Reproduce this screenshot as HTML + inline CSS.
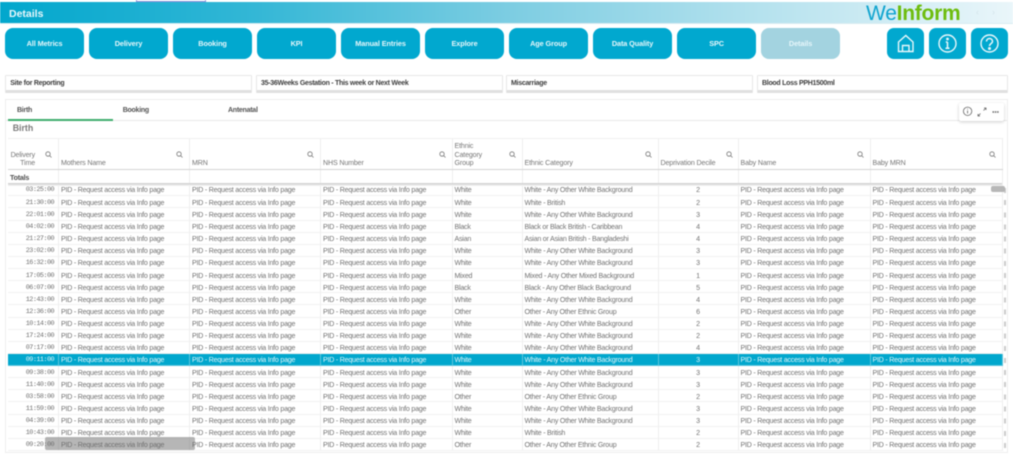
<!DOCTYPE html>
<html><head><meta charset="utf-8"><style>
html,body{margin:0;padding:0;background:#fff}
body{width:1013px;height:458px;overflow:hidden;position:relative;font-family:"Liberation Sans",sans-serif}
.abs{position:absolute}
#root{position:absolute;left:0;top:0;width:1013px;height:458px;overflow:hidden;filter:blur(.4px)}
.hdr{left:0;top:2px;width:1013px;height:21px;background:linear-gradient(90deg,#01a7cd 0%,#33b7d6 25%,#7ccde2 50%,#b5e2ee 75%,#eaf6fa 100%);border-bottom:1px solid #d9ecf2}
.btn{position:absolute;top:28px;height:31px;width:78.5px;background:#01a8cf;border-radius:8px;color:#e6f6fa;font-size:7.3px;font-weight:bold;text-align:center;line-height:31px;letter-spacing:-.1px}
.ib{position:absolute;top:28px;width:37px;height:31px;background:#01a8cf;border-radius:7px}
.flt{position:absolute;top:75px;height:18px;border:1px solid #e8e8e8;border-bottom:3px solid #e0e0e0;font-size:7px;font-weight:bold;color:#404040;line-height:15.500px;padding-left:4px;box-sizing:border-box;border-radius:1px;letter-spacing:-.28px}
.tab{position:absolute;top:107px;font-size:7px;font-weight:bold;color:#555;letter-spacing:-.25px}
table{position:absolute;left:8px;top:138px;border-collapse:collapse;table-layout:fixed;width:994px;font-size:7.1px;color:#727272;letter-spacing:-.235px}
td,th{padding:0 2px;overflow:hidden;white-space:nowrap;border-right:1px solid #eee;border-bottom:1px solid #f1f1f1;font-weight:normal;box-sizing:border-box}
tr.r td{height:12.14px;line-height:8px;padding-top:2.500px;vertical-align:top}
tr.h th{height:31px;vertical-align:bottom;text-align:left;padding-bottom:1px;border-bottom:1px solid #d4d4d4;color:#777;white-space:normal;line-height:8.4px;position:relative;letter-spacing:-.15px}
tr.t td{height:14.7px;border-bottom:0;font-weight:bold;color:#505050;padding-top:2px;letter-spacing:-.2px}
.c{text-align:center}
tr.r td.m{text-align:right;font-family:"Liberation Mono",monospace;font-size:6.8px;letter-spacing:-.55px;padding-right:4px;color:#707070}
tr.s td,tr.r.s td.m{background:#01a7cd;color:#e2f5f9;border-color:#5cc4dd}
.q{position:absolute;top:13px;right:6px;width:7px;height:7px}
</style></head><body><div id="root">
<div class="abs" style="left:136px;top:0;width:70px;height:2px;border:1px solid #8d8dd8;border-top:0;box-sizing:border-box"></div>
<div class="abs hdr"></div>
<div class="abs" style="left:9px;top:8px;font-size:10.5px;font-weight:bold;color:#e8f7fb">Details</div>
<div class="abs" style="left:866px;top:2px;font-size:21px;line-height:24px;letter-spacing:-.25px;font-weight:normal"><span style="color:#0fa4cf">We</span><span style="color:#6ebd0f;font-weight:bold">Inform</span></div>
<div class="abs" style="left:976px;top:7px;font-size:9px;color:#d4e4ea">&#8249;</div>
<div class="abs" style="left:992px;top:7px;font-size:9px;color:#d4e4ea">&#8250;</div>

<div class="btn" style="left:5.3px">All Metrics</div>
<div class="btn" style="left:89.3px">Delivery</div>
<div class="btn" style="left:173.3px">Booking</div>
<div class="btn" style="left:257.3px">KPI</div>
<div class="btn" style="left:341.3px">Manual Entries</div>
<div class="btn" style="left:425.3px">Explore</div>
<div class="btn" style="left:509.3px">Age Group</div>
<div class="btn" style="left:593.3px">Data Quality</div>
<div class="btn" style="left:677.3px">SPC</div>
<div class="btn" style="left:761.3px;background:#a3d3e0">Details</div>

<div class="ib" style="left:887px"><svg width="37" height="31" fill="none" stroke="#e8f7fb" stroke-width="1.4"><path d="M11.500 14 18.800 7.500 26 14V23.500H11.500ZM15.500 23.500V17.500H22V23.500"/></svg></div>
<div class="ib" style="left:929px"><svg width="37" height="31" fill="none" stroke="#e8f7fb" stroke-width="1.4"><circle cx="18.500" cy="15.500" r="8.500"/><path d="M18.500 14v6M16.500 20.200h4M16.800 14h1.700" stroke-width="1.500"/><circle cx="18.500" cy="11" r=".7" fill="#e8f7fb"/></svg></div>
<div class="ib" style="left:971px"><svg width="37" height="31" fill="none" stroke="#e8f7fb" stroke-width="1.4"><circle cx="18.500" cy="15.500" r="8.500"/><path d="M15.500 13.500c0-4 6-4 6 0 0 2-3 2.200-3 4.500" stroke-width="1.500"/><circle cx="18.500" cy="20.500" r=".8" fill="#e8f7fb"/></svg></div>

<div class="flt" style="left:5.3px;width:246.5px">Site for Reporting</div>
<div class="flt" style="left:256px;width:247px">35-36Weeks Gestation - This week or Next Week</div>
<div class="flt" style="left:506px;width:247px">Miscarriage</div>
<div class="flt" style="left:757px;width:251px">Blood Loss PPH1500ml</div>

<div class="abs" style="left:5px;top:99px;width:1003px;height:354px;border:1px solid #eee;box-sizing:border-box"></div>
<div class="abs" style="left:6px;top:120px;width:1001px;height:1px;background:#eaeaea"></div>
<div class="abs" style="left:8px;top:119px;width:105px;height:1.500px;background:#3fae6d"></div>
<div class="tab" style="left:17px">Birth</div>
<div class="tab" style="left:122.700px">Booking</div>
<div class="tab" style="left:228px">Antenatal</div>
<div class="abs" style="left:12.700px;top:123px;font-size:8.800px;font-weight:bold;color:#7b7b7b">Birth</div>

<div class="abs" style="left:958.700px;top:103px;width:45.500px;height:17.500px;background:#fff;border-radius:2px;box-shadow:0 1px 3px rgba(0,0,0,.2)"><svg width="46" height="18" fill="none" stroke="#666" stroke-width=".8"><circle cx="8.600" cy="8.300" r="4.200"/><path d="M8.600 7.500v3M8.600 5.800v.7"/><path d="M19 13l2.500-2.500M19 11v2h2M24.500 7.500 27 5M25 5h2v2"/><path d="M33.500 9h1.500M35.800 9h1.500M38.100 9h1.500" stroke-width="1.400"/></svg></div>

<table>
<colgroup><col style="width:50.500px"><col style="width:131px"><col style="width:131px"><col style="width:131.500px"><col style="width:70px"><col style="width:136px"><col style="width:80px"><col style="width:132px"><col style="width:132px"></colgroup>
<tr class="h">
<th style="text-align:right;padding-right:23px">Delivery<br>Time<svg class="q" viewBox="0 0 7 7" fill="none" stroke="#777" stroke-width=".8"><circle cx="3" cy="3" r="2.200"/><path d="M4.600 4.600 6.500 6.500"/></svg></th>
<th>Mothers Name<svg class="q" viewBox="0 0 7 7" fill="none" stroke="#777" stroke-width=".8"><circle cx="3" cy="3" r="2.200"/><path d="M4.600 4.600 6.500 6.500"/></svg></th>
<th>MRN<svg class="q" viewBox="0 0 7 7" fill="none" stroke="#777" stroke-width=".8"><circle cx="3" cy="3" r="2.200"/><path d="M4.600 4.600 6.500 6.500"/></svg></th>
<th>NHS Number<svg class="q" viewBox="0 0 7 7" fill="none" stroke="#777" stroke-width=".8"><circle cx="3" cy="3" r="2.200"/><path d="M4.600 4.600 6.500 6.500"/></svg></th>
<th>Ethnic<br>Category<br>Group<svg class="q" viewBox="0 0 7 7" fill="none" stroke="#777" stroke-width=".8"><circle cx="3" cy="3" r="2.200"/><path d="M4.600 4.600 6.500 6.500"/></svg></th>
<th>Ethnic Category<svg class="q" viewBox="0 0 7 7" fill="none" stroke="#777" stroke-width=".8"><circle cx="3" cy="3" r="2.200"/><path d="M4.600 4.600 6.500 6.500"/></svg></th>
<th>Deprivation Decile<svg class="q" viewBox="0 0 7 7" fill="none" stroke="#777" stroke-width=".8" style="right:5px"><circle cx="3" cy="3" r="2.200"/><path d="M4.600 4.600 6.500 6.500"/></svg></th>
<th>Baby Name<svg class="q" viewBox="0 0 7 7" fill="none" stroke="#777" stroke-width=".8"><circle cx="3" cy="3" r="2.200"/><path d="M4.600 4.600 6.500 6.500"/></svg></th>
<th>Baby MRN<svg class="q" viewBox="0 0 7 7" fill="none" stroke="#777" stroke-width=".8"><circle cx="3" cy="3" r="2.200"/><path d="M4.600 4.600 6.500 6.500"/></svg></th>
</tr>
<tr class="t"><td>Totals</td><td></td><td></td><td></td><td></td><td></td><td></td><td></td><td></td></tr>
<tr class="r"><td class="m">03:25:00</td><td>PID - Request access via Info page</td><td>PID - Request access via Info page</td><td>PID - Request access via Info page</td><td>White</td><td>White - Any Other White Background</td><td class="c">2</td><td>PID - Request access via Info page</td><td>PID - Request access via Info page</td></tr>
<tr class="r"><td class="m">21:30:00</td><td>PID - Request access via Info page</td><td>PID - Request access via Info page</td><td>PID - Request access via Info page</td><td>White</td><td>White - British</td><td class="c">2</td><td>PID - Request access via Info page</td><td>PID - Request access via Info page</td></tr>
<tr class="r"><td class="m">22:01:00</td><td>PID - Request access via Info page</td><td>PID - Request access via Info page</td><td>PID - Request access via Info page</td><td>White</td><td>White - Any Other White Background</td><td class="c">3</td><td>PID - Request access via Info page</td><td>PID - Request access via Info page</td></tr>
<tr class="r"><td class="m">04:02:00</td><td>PID - Request access via Info page</td><td>PID - Request access via Info page</td><td>PID - Request access via Info page</td><td>Black</td><td>Black or Black British - Caribbean</td><td class="c">4</td><td>PID - Request access via Info page</td><td>PID - Request access via Info page</td></tr>
<tr class="r"><td class="m">21:27:00</td><td>PID - Request access via Info page</td><td>PID - Request access via Info page</td><td>PID - Request access via Info page</td><td>Asian</td><td>Asian or Asian British - Bangladeshi</td><td class="c">4</td><td>PID - Request access via Info page</td><td>PID - Request access via Info page</td></tr>
<tr class="r"><td class="m">23:02:00</td><td>PID - Request access via Info page</td><td>PID - Request access via Info page</td><td>PID - Request access via Info page</td><td>White</td><td>White - Any Other White Background</td><td class="c">3</td><td>PID - Request access via Info page</td><td>PID - Request access via Info page</td></tr>
<tr class="r"><td class="m">16:32:00</td><td>PID - Request access via Info page</td><td>PID - Request access via Info page</td><td>PID - Request access via Info page</td><td>White</td><td>White - Any Other White Background</td><td class="c">3</td><td>PID - Request access via Info page</td><td>PID - Request access via Info page</td></tr>
<tr class="r"><td class="m">17:05:00</td><td>PID - Request access via Info page</td><td>PID - Request access via Info page</td><td>PID - Request access via Info page</td><td>Mixed</td><td>Mixed - Any Other Mixed Background</td><td class="c">1</td><td>PID - Request access via Info page</td><td>PID - Request access via Info page</td></tr>
<tr class="r"><td class="m">06:07:00</td><td>PID - Request access via Info page</td><td>PID - Request access via Info page</td><td>PID - Request access via Info page</td><td>Black</td><td>Black - Any Other Black Background</td><td class="c">5</td><td>PID - Request access via Info page</td><td>PID - Request access via Info page</td></tr>
<tr class="r"><td class="m">12:43:00</td><td>PID - Request access via Info page</td><td>PID - Request access via Info page</td><td>PID - Request access via Info page</td><td>White</td><td>White - Any Other White Background</td><td class="c">4</td><td>PID - Request access via Info page</td><td>PID - Request access via Info page</td></tr>
<tr class="r"><td class="m">12:36:00</td><td>PID - Request access via Info page</td><td>PID - Request access via Info page</td><td>PID - Request access via Info page</td><td>Other</td><td>Other - Any Other Ethnic Group</td><td class="c">6</td><td>PID - Request access via Info page</td><td>PID - Request access via Info page</td></tr>
<tr class="r"><td class="m">10:14:00</td><td>PID - Request access via Info page</td><td>PID - Request access via Info page</td><td>PID - Request access via Info page</td><td>White</td><td>White - Any Other White Background</td><td class="c">2</td><td>PID - Request access via Info page</td><td>PID - Request access via Info page</td></tr>
<tr class="r"><td class="m">17:24:00</td><td>PID - Request access via Info page</td><td>PID - Request access via Info page</td><td>PID - Request access via Info page</td><td>White</td><td>White - Any Other White Background</td><td class="c">2</td><td>PID - Request access via Info page</td><td>PID - Request access via Info page</td></tr>
<tr class="r"><td class="m">07:17:00</td><td>PID - Request access via Info page</td><td>PID - Request access via Info page</td><td>PID - Request access via Info page</td><td>White</td><td>White - Any Other White Background</td><td class="c">4</td><td>PID - Request access via Info page</td><td>PID - Request access via Info page</td></tr>
<tr class="r s"><td class="m">09:11:00</td><td>PID - Request access via Info page</td><td>PID - Request access via Info page</td><td>PID - Request access via Info page</td><td>White</td><td>White - Any Other White Background</td><td class="c">3</td><td>PID - Request access via Info page</td><td>PID - Request access via Info page</td></tr>
<tr class="r"><td class="m">09:38:00</td><td>PID - Request access via Info page</td><td>PID - Request access via Info page</td><td>PID - Request access via Info page</td><td>White</td><td>White - Any Other White Background</td><td class="c">3</td><td>PID - Request access via Info page</td><td>PID - Request access via Info page</td></tr>
<tr class="r"><td class="m">11:40:00</td><td>PID - Request access via Info page</td><td>PID - Request access via Info page</td><td>PID - Request access via Info page</td><td>White</td><td>White - Any Other White Background</td><td class="c">3</td><td>PID - Request access via Info page</td><td>PID - Request access via Info page</td></tr>
<tr class="r"><td class="m">03:58:00</td><td>PID - Request access via Info page</td><td>PID - Request access via Info page</td><td>PID - Request access via Info page</td><td>Other</td><td>Other - Any Other Ethnic Group</td><td class="c">2</td><td>PID - Request access via Info page</td><td>PID - Request access via Info page</td></tr>
<tr class="r"><td class="m">11:59:00</td><td>PID - Request access via Info page</td><td>PID - Request access via Info page</td><td>PID - Request access via Info page</td><td>White</td><td>White - Any Other White Background</td><td class="c">3</td><td>PID - Request access via Info page</td><td>PID - Request access via Info page</td></tr>
<tr class="r"><td class="m">04:39:00</td><td>PID - Request access via Info page</td><td>PID - Request access via Info page</td><td>PID - Request access via Info page</td><td>White</td><td>White - Any Other White Background</td><td class="c">3</td><td>PID - Request access via Info page</td><td>PID - Request access via Info page</td></tr>
<tr class="r"><td class="m">10:43:00</td><td>PID - Request access via Info page</td><td>PID - Request access via Info page</td><td>PID - Request access via Info page</td><td>White</td><td>White - British</td><td class="c">2</td><td>PID - Request access via Info page</td><td>PID - Request access via Info page</td></tr>
<tr class="r"><td class="m">09:20:00</td><td>PID - Request access via Info page</td><td>PID - Request access via Info page</td><td>PID - Request access via Info page</td><td>Other</td><td>Other - Any Other Ethnic Group</td><td class="c">2</td><td>PID - Request access via Info page</td><td>PID - Request access via Info page</td></tr>
</table>
<div class="abs" style="left:8px;top:183px;width:994px;height:3px;background:linear-gradient(#ccc,#f6f6f6)"></div>
<div class="abs" style="left:8px;top:138px;width:994px;height:1px;background:#f0f0f0"></div>
<div class="abs" style="left:1004px;top:186px;width:2px;height:264px;background:repeating-linear-gradient(#fff 0,#fff 2px,#ccc 2px,#ccc 7px,#fff 7px,#fff 12.140px)"></div>
<div class="abs" style="left:991px;top:186px;width:14px;height:6px;background:#aaa;border-radius:2px;opacity:.85"></div>
<div class="abs" style="left:45px;top:437px;width:150px;height:13px;background:rgba(110,110,110,.5);border-radius:2px"></div>
</div></body></html>
